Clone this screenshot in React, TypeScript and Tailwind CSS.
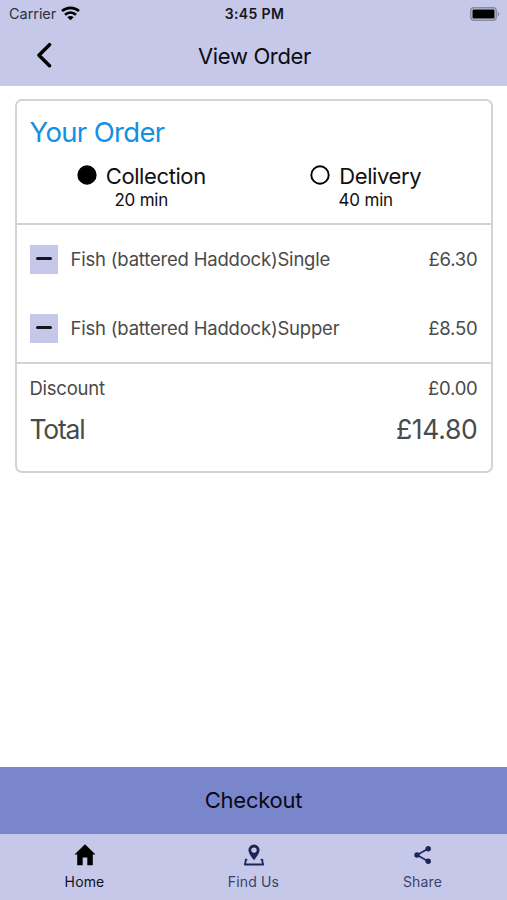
import type { ReactNode } from "react";

function StatusBar() {
  return (
    <div className="flex h-[27px] items-center justify-between pl-[9px] pr-[7px]">
      <div className="flex w-[160px] items-center gap-[5px]">
        <span className="text-[14.5px] leading-[18px] tracking-[-0.05px] text-[#30313c]">Carrier</span>
        <svg width="19" height="15" viewBox="0 0 19 15" fill="none" stroke="#000" strokeWidth="2.700">
          <path d="M1 5.1C5.9 .7 13.1 .7 18 5.1" />
          <path d="M4 8.7c3.3-2.9 7.700-2.900 11 0" />
          <path d="M9.500 14.200 6.300 11.200c1.800-1.700 4.600-1.700 6.400 0Z" fill="#000" stroke="none" />
        </svg>
      </div>
      <span className="text-[14px] font-semibold leading-[18px] tracking-[0.35px] text-[#15161c]">3:45 PM</span>
      <div className="flex w-[160px] justify-end">
        <svg width="30" height="14" viewBox="0 0 30 14">
          <rect x=".75" y=".75" width="25.500" height="12.500" rx="3.200" fill="none" stroke="#888aa0" strokeWidth="1.500" />
          <rect x="2.500" y="2.500" width="22" height="9" rx="1.200" fill="#000" />
          <path d="M27.700 4.700c2.100.8 2.100 3.800 0 4.600Z" fill="#888aa0" />
        </svg>
      </div>
    </div>
  );
}

function Option({ label, time, selected }: { label: string; time: string; selected?: boolean }) {
  return (
    <div className="flex flex-1 flex-col items-center">
      <div className="flex items-center gap-[9px]">
        <svg className="overflow-visible" width="20" height="20" viewBox="0 0 20 20">
          <circle cx="10" cy="9" r="8.700" fill={selected ? "#000" : "none"} stroke="#000" strokeWidth="1.900" />
        </svg>
        <span className="text-[22px] leading-[28px] tracking-[-0.4px] text-[#111]">{label}</span>
      </div>
      <span className="text-[17px] leading-[20px] tracking-[-0.2px] text-[#111]">{time}</span>
    </div>
  );
}

function Item({ name, price }: { name: string; price: string }) {
  return (
    <div className="flex h-[69px] items-center text-[18.5px] tracking-[-0.2px] text-[#4a4a4a]">
      <div className="flex h-[29px] w-[28px] items-center justify-center bg-[#c5c8e8]">
        <div className="mb-[2px] h-[3px] w-[16px] rounded-full bg-[#15151c]" />
      </div>
      <span className="ml-[13px] flex-1">{name}</span>
      <span>{price}</span>
    </div>
  );
}

function Tab({ label, active, children }: { label: string; active?: boolean; children: ReactNode }) {
  return (
    <div className={active ? "flex flex-1 flex-col items-center pt-[9px] text-black" : "flex flex-1 flex-col items-center pt-[9px] text-[#1d2558]"}>
      {children}
      <span className={active ? "mt-[6px] text-[14px] leading-[18px] tracking-[0.15px] text-[#11121f]" : "mt-[6px] text-[14px] leading-[18px] tracking-[0.15px] text-[#3b426b]"}>{label}</span>
    </div>
  );
}

export default function App() {
  return (
    <div className="flex h-[900px] w-[507px] flex-col bg-white font-['Inter','Liberation_Sans',sans-serif]">
      <header className="h-[86px] bg-[#c5c8e8]">
        <StatusBar />
        <div className="flex h-[57px] items-center justify-between">
          <div className="w-[90px] pl-[36px]">
            <svg className="-mt-[2px]" width="17" height="26" viewBox="0 0 17 26" fill="none" stroke="#000" strokeWidth="3.500" strokeLinecap="round" strokeLinejoin="round">
              <path d="M13.500 2.700 3 13.200 13.500 23.700" />
            </svg>
          </div>
          <h1 className="text-[22px] leading-[28px] tracking-[-0.35px] text-[#0c0c12]">View Order</h1>
          <div className="w-[88px]" />
        </div>
      </header>

      <main className="flex-1 pl-[15px] pr-[14px] pt-[13px]">
        <section className="h-[374px] rounded-[7px] border-2 border-[#d3d3d3]">
          <div className="h-[124px] border-b-2 border-[#d3d3d3] pt-[13px]">
            <h2 className="pl-[12.5px] text-[27.5px] leading-[36px] tracking-[-0.65px] text-[#168fe2]">Your Order</h2>
            <div className="flex pl-[12px] pr-[13px] pt-[12px]">
              <Option label="Collection" time="20 min" selected />
              <Option label="Delivery" time="40 min" />
            </div>
          </div>
          <div className="h-[139px] border-b-2 border-[#d3d3d3] pl-[12.5px] pr-[13.5px]">
            <Item name="Fish (battered Haddock)Single" price="£6.30" />
            <Item name="Fish (battered Haddock)Supper" price="£8.50" />
          </div>
          <div className="pl-[12.5px] pr-[13.5px] pt-[11px] text-[#4a4a4a]">
            <div className="flex justify-between text-[18.5px] leading-[26px] tracking-[-0.25px]">
              <span>Discount</span>
              <span>£0.00</span>
            </div>
            <div className="mt-[10px] flex justify-between text-[26.5px] leading-[36px]">
              <span className="tracking-[-1.2px]">Total</span>
              <span className="tracking-[-0.3px]">£14.80</span>
            </div>
          </div>
        </section>
      </main>

      <button className="h-[67px] bg-[#7986cb] text-[22px] tracking-[-0.25px] text-[#080a18]">Checkout</button>
      <nav className="flex h-[66px] bg-[#c5c8e8]">
        <Tab label="Home" active>
          <svg width="24" height="24" viewBox="0 0 24 24" fill="currentColor">
            <path d="M12 1.300 22.500 11.500h-2.700V22.300h-5.500V14.500H9.700v7.800H4.200V11.500H1.500Z" />
          </svg>
        </Tab>
        <Tab label="Find Us">
          <svg width="24" height="24" viewBox="0 0 24 24">
            <path fill="currentColor" fillRule="evenodd" d="M12 1.500a5.600 5.600 0 0 0-5.600 5.600C6.400 11 12 17.200 12 17.200S17.600 11 17.600 7.100A5.600 5.600 0 0 0 12 1.500Zm0 2.900a2.700 2.700 0 1 1 0 5.400 2.700 2.700 0 0 1 0-5.400Z" />
            <path fill="none" stroke="currentColor" strokeWidth="1.800" strokeLinejoin="round" strokeLinecap="round" d="M4.500 16.700h-.8c.2 1.800-.3 3-.9 4.800h18.400c-.6-1.800-1.100-3-.9-4.800h-.8" />
          </svg>
        </Tab>
        <Tab label="Share">
          <svg width="24" height="24" viewBox="0 0 24 24" fill="currentColor">
            <path fill="none" stroke="currentColor" strokeWidth="1.600" d="M17 5.800 6 12l11 6.200" />
            <circle cx="6" cy="12" r="2.700" /><circle cx="17.200" cy="5.700" r="2.700" /><circle cx="17.200" cy="18.300" r="2.700" />
          </svg>
        </Tab>
      </nav>
    </div>
  );
}
